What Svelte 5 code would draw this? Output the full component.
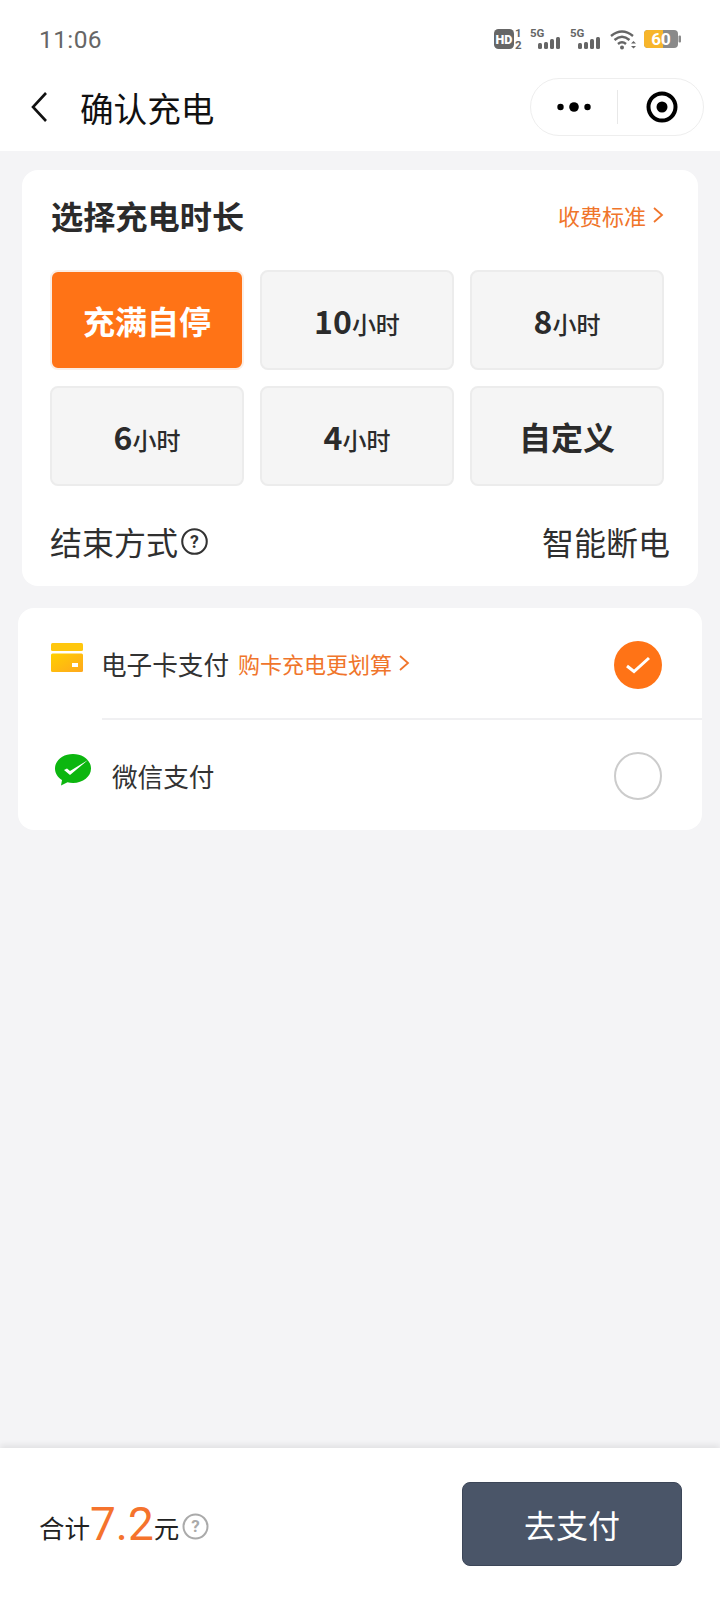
<script>
	const durations = [
		{ num: "", unit: "充满自停", active: true },
		{ num: "10", unit: "小时" },
		{ num: "8", unit: "小时" },
		{ num: "6", unit: "小时" },
		{ num: "4", unit: "小时" },
		{ num: "", unit: "自定义" }
	];
</script>

<div class="page">
	<header class="top">
		<div class="status">
			<span class="time">11:06</span>
			<div class="status-icons">
				<svg width="190" height="24" viewBox="0 0 190 24">
					<rect x="0" y="2" width="20" height="20" rx="4.500" fill="#666" />
					<text x="10" y="16.500" class="hd">HD</text>
					<text x="21" y="10" class="tiny">1</text>
					<text x="21" y="22" class="tiny">2</text>
					<text x="36" y="10" class="tiny">5G</text>
					<g fill="#666">
						<rect x="44" y="16" width="4" height="6" rx="1.500" />
						<rect x="50" y="15" width="4" height="7" rx="1.500" />
						<rect x="56" y="12" width="4" height="10" rx="1.500" />
						<rect x="62" y="10" width="4" height="12" rx="1.500" />
					</g>
					<text x="76" y="10" class="tiny">5G</text>
					<g fill="#666">
						<rect x="84" y="16" width="4" height="6" rx="1.500" />
						<rect x="90" y="15" width="4" height="7" rx="1.500" />
						<rect x="96" y="12" width="4" height="10" rx="1.500" />
						<rect x="102" y="10" width="4" height="12" rx="1.500" />
					</g>
					<g fill="none" stroke="#666" stroke-width="2.400">
						<path d="M117 9 Q128 0 139 9" />
						<path d="M120.500 13 Q128 6.500 135.500 13" />
						<path d="M124 17 Q128 13.500 132 17" />
					</g>
					<circle cx="128" cy="20.500" r="2" fill="#666" />
					<path d="M137 16.500 l2.500 -2.500 l2.500 2.500z M137 19 l2.500 2.500 l2.500 -2.500z" fill="#666" />
					<rect x="150" y="3" width="34" height="18" rx="4" fill="#8a8a8a" />
					<path d="M154 3 H169 V21 H154 a4 4 0 0 1 -4 -4 V7 a4 4 0 0 1 4 -4z" fill="#f7b52b" />
					<rect x="184.500" y="8.500" width="2.500" height="7" rx="1" fill="#8a8a8a" />
					<text x="167" y="18" class="batt">60</text>
				</svg>
			</div>
		</div>
		<div class="nav">
			<svg class="back" width="20" height="32" viewBox="0 0 20 32">
				<path d="M17 2 L4 16 L17 30" fill="none" stroke="#111" stroke-width="2.600" />
			</svg>
			<h1>确认充电</h1>
			<div class="capsule">
				<div class="capsule-part left">
					<svg width="36" height="12" viewBox="0 0 36 12">
						<circle cx="4.500" cy="6" r="3.200" fill="#000" />
						<circle cx="18" cy="6" r="4.800" fill="#000" />
						<circle cx="31.500" cy="6" r="3.200" fill="#000" />
					</svg>
				</div>
				<i class="capsule-line"></i>
				<div class="capsule-part right">
					<svg width="32" height="32" viewBox="0 0 32 32">
						<circle cx="16" cy="16" r="13.500" fill="none" stroke="#000" stroke-width="4" />
						<circle cx="16" cy="16" r="5.500" fill="#000" />
					</svg>
				</div>
			</div>
		</div>
	</header>

	<main class="content">
		<section class="card duration">
			<div class="card-head">
				<h2>选择充电时长</h2>
				<span class="link">收费标准
					<svg width="12" height="18" viewBox="0 0 12 18"><path d="M2 2 L10 9 L2 16" fill="none" stroke="#f0752b" stroke-width="1.800" /></svg>
				</span>
			</div>
			<div class="grid">
				{#each durations as d}
					<div class="opt" class:active={d.active} class:word={!d.num}>
						{#if d.num}<b>{d.num}</b><span>{d.unit}</span>{:else}{d.unit}{/if}
					</div>
				{/each}
			</div>
			<div class="end-row">
				<div class="end-label">结束方式
					<svg width="27" height="27" viewBox="0 0 26 26">
						<circle cx="13" cy="13" r="11.800" fill="none" stroke="#333" stroke-width="2" />
						<text x="13" y="19" class="q">?</text>
					</svg>
				</div>
				<span class="end-value">智能断电</span>
			</div>
		</section>

		<section class="card pay">
			<div class="pay-row first">
				<svg class="card-icon" width="32" height="30" viewBox="0 0 32 30">
					<defs>
						<linearGradient id="cardfill" x1="0" y1="0" x2="1" y2="1">
							<stop offset="0" stop-color="#ffd000" />
							<stop offset="1" stop-color="#ffa81e" />
						</linearGradient>
					</defs>
					<rect x="0" y="0" width="32" height="8" rx="1.500" fill="#ffc70d" />
					<rect x="0" y="10.500" width="32" height="18.500" rx="1.500" fill="url(#cardfill)" />
					<rect x="21" y="20" width="6" height="4" fill="#fff" />
				</svg>
				<span class="pay-name">电子卡支付</span>
				<span class="promo">购卡充电更划算
					<svg width="12" height="18" viewBox="0 0 12 18"><path d="M2 2 L10 9 L2 16" fill="none" stroke="#f0752b" stroke-width="1.800" /></svg>
				</span>
				<span class="radio on">
					<svg width="26" height="20" viewBox="0 0 26 20"><path d="M2 11 L9 16.500 L24 3" fill="none" stroke="#fff" stroke-width="3" /></svg>
				</span>
			</div>
			<div class="pay-row second">
				<svg class="wx-icon" width="36" height="32" viewBox="0 0 36 32">
					<path d="M18 0 C8 0 0 6.300 0 14.500 C0 19.200 2.700 23.300 7 26 L6 31.500 L12.500 28.200 C14.200 28.700 16 29 18 29 C28 29 36 22.500 36 14.500 C36 6.300 28 0 18 0z" fill="#0cb60f" />
					<path d="M9 16 L12 14.500 L15 17 L33 6 L15 21z" fill="#fff" />
				</svg>
				<span class="pay-name wx">微信支付</span>
				<span class="radio"></span>
			</div>
		</section>
	</main>

	<footer class="bottom">
		<div class="total">
			<span class="total-text">合计</span><span class="price">7.2</span><span class="total-text">元</span>
			<svg width="27" height="27" viewBox="0 0 27 27">
				<circle cx="13.500" cy="13.500" r="12" fill="none" stroke="#aaa" stroke-width="2" />
				<text x="13.500" y="19" class="q grey">?</text>
			</svg>
		</div>
		<button class="pay-btn">去支付</button>
	</footer>
</div>

<style>
	:global(body) {
		margin: 0;
	}

	.page {
		background: #f4f4f6;
		color: #222;
		display: flex;
		flex-direction: column;
		font-family: "Noto Sans CJK SC", "Noto Sans", sans-serif;
		height: 1600px;
		width: 720px;
	}

	.top {
		background: #fff;
		height: 151px;
	}

	.status {
		align-items: center;
		display: flex;
		height: 78px;
		justify-content: space-between;
		padding: 0 36px 0 39px;
	}

	.time {
		color: #666;
		font-family: "Roboto", sans-serif;
		font-size: 24.500px;
		letter-spacing: .4px;
	}

	.status-icons {
		display: flex;
		height: 24px;
	}

	.hd {
		fill: #fff;
		font-family: "Roboto", sans-serif;
		font-size: 12.500px;
		font-weight: 900;
		text-anchor: middle;
	}

	.tiny {
		fill: #666;
		font-family: "Roboto", sans-serif;
		font-size: 11.500px;
		font-weight: 700;
	}

	.batt {
		fill: #fff;
		font-family: "Roboto", sans-serif;
		font-size: 17px;
		font-weight: 700;
		text-anchor: middle;
	}

	.nav {
		align-items: center;
		display: flex;
		height: 58px;
		padding: 0 16px 0 29px;
	}

	.back {
		margin-right: 31px;
	}

	h1 {
		color: #111;
		flex: 1;
		font-size: 33.600px;
		font-weight: 400;
		margin: 0;
	}

	.capsule {
		align-items: center;
		border: 1px solid #eee;
		border-radius: 29px;
		box-sizing: border-box;
		display: flex;
		height: 58px;
		width: 174px;
	}

	.capsule-part {
		align-items: center;
		display: flex;
		justify-content: center;
	}

	.capsule-part.left {
		width: 86px;
	}

	.capsule-part.right {
		flex: 1;
		padding-left: 3px;
	}

	.capsule-line {
		background: #e8e8e8;
		height: 34px;
		width: 1px;
	}

	.content {
		display: flex;
		flex: 1;
		flex-direction: column;
		gap: 22px;
		padding-top: 19px;
	}

	.card {
		background: #fff;
		border-radius: 16px;
	}

	.duration {
		box-sizing: border-box;
		height: 416px;
		margin: 0 22px;
		padding: 23px 34px 0 28px;
	}

	.card-head {
		align-items: center;
		display: flex;
		height: 44px;
		justify-content: space-between;
	}

	h2 {
		color: #2b2b2b;
		font-size: 32.200px;
		font-weight: 700;
		margin: 0 0 0 1px;
	}

	.link, .promo {
		align-items: center;
		color: #f0752b;
		display: inline-flex;
		font-size: 22px;
		gap: 6px;
	}

	.grid {
		display: grid;
		gap: 16px;
		grid-template-columns: repeat(3, 194px);
		margin-top: 33px;
	}

	.opt {
		align-items: baseline;
		background: #f5f5f5;
		border: 2px solid #ececec;
		border-radius: 8px;
		box-sizing: border-box;
		color: #2b2b2b;
		display: flex;
		height: 100px;
		justify-content: center;
		line-height: 96px;
	}

	.opt b {
		font-size: 32px;
		font-weight: 700;
	}

	.opt span {
		font-size: 24px;
		font-weight: 500;
	}

	.opt.word {
		font-size: 32px;
		font-weight: 700;
	}

	.opt.active {
		background: #ff7316;
		border-color: #fbeee5;
		color: #fff;
	}

	.end-row {
		align-items: center;
		display: flex;
		justify-content: space-between;
		margin-right: -6px;
		margin-top: 32px;
	}

	.end-label, .end-value {
		color: #2f2f2f;
		font-size: 32px;
	}

	.end-label {
		align-items: center;
		display: flex;
	}

	.end-label svg {
		margin-left: 3px;
	}

	.q {
		fill: #333;
		font-family: "Roboto", sans-serif;
		font-size: 17px;
		font-weight: 700;
		text-anchor: middle;
	}

	.q.grey {
		fill: #aaa;
	}

	.pay {
		margin: 0 18px;
	}

	.pay-row {
		align-items: center;
		display: flex;
		height: 110px;
		position: relative;
	}

	.pay-row.first {
		border-bottom: 2px solid transparent;
	}

	.pay-row.first::after {
		background: #f0f0f2;
		bottom: -2px;
		content: "";
		height: 2px;
		left: 84px;
		position: absolute;
		right: 0;
	}

	.card-icon {
		margin: -11px 18px 0 33px;
	}

	.wx-icon {
		margin: -11px 0 0 37px;
	}

	.pay-name {
		color: #333;
		font-size: 25.600px;
	}

	.pay-name.wx {
		margin-left: 21px;
	}

	.promo {
		margin-left: 9px;
	}

	.radio {
		align-items: center;
		border: 2px solid #ccc;
		border-radius: 50%;
		box-sizing: border-box;
		display: flex;
		height: 48px;
		justify-content: center;
		margin-left: auto;
		margin-right: 40px;
		margin-top: 2px;
		width: 48px;
	}

	.radio.on {
		background: #ff7316;
		border: none;
		margin-top: 4px;
	}

	.bottom {
		align-items: center;
		background: #fff;
		box-shadow: 0 -3px 6px rgba(0, 0, 0, .08);
		display: flex;
		height: 152px;
		justify-content: space-between;
		padding: 0 38px 0 39px;
	}

	.total {
		align-items: center;
		display: flex;
	}

	.total-text {
		font-size: 25.500px;
		margin-top: 5px;
	}

	.price {
		color: #f5732d;
		font-family: "Roboto", sans-serif;
		font-size: 46px;
		font-weight: 400;
	}

	.total svg {
		margin: 5px 0 0 3px;
	}

	.pay-btn {
		background: #4a5568;
		border: 1px solid #3c4658;
		border-radius: 8px;
		color: #fff;
		font-family: inherit;
		font-size: 32px;
		height: 84px;
		padding: 0;
		width: 220px;
	}
</style>
